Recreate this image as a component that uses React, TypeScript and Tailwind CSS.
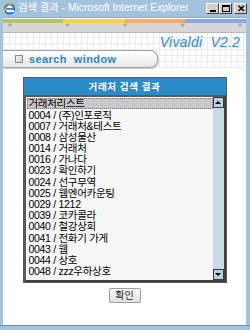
import React from "react";

const items = [
  "0004 / (주)인포로직",
  "0007 / 거래처&테스트",
  "0008 / 삼성물산",
  "0014 / 거래처",
  "0016 / 가나다",
  "0023 / 확인하기",
  "0024 / 선구무역",
  "0025 / 웹엔어카운팅",
  "0029 / 1212",
  "0039 / 코카콜라",
  "0040 / 철강상회",
  "0041 / 전화기 가게",
  "0043 / 웹",
  "0044 / 상호",
  "0048 / zzz우하상호",
];

const font = "font-['Liberation_Sans','Noto_Sans_CJK_KR',sans-serif]";

function IeIcon() {
  return (
    <svg width="13" height="13" viewBox="0 0 13 13">
      <circle cx="6.5" cy="7" r="4.6" fill="#fff" stroke="#1e6fd0" strokeWidth="2" />
      <rect x="3" y="6.2" width="7" height="1.6" fill="#1e6fd0" />
      <rect x="8" y="8" width="3" height="2" fill="#fff" />
      <path d="M1 10 C 3 3, 10 0, 12 2" fill="none" stroke="#f2b021" strokeWidth="1.3" />
    </svg>
  );
}

function WinButton({ children }: { children: React.ReactNode }) {
  return (
    <div className="flex h-[11px] w-[13px] items-center justify-center border border-t-white border-l-white border-r-[#404040] border-b-[#404040] bg-[#d4d0c8] text-black">
      {children}
    </div>
  );
}

export default function App() {
  return (
    <div className={`flex h-[330px] w-[250px] flex-col overflow-hidden bg-[#a3c2dc] ${font}`}>
      {/* title bar */}
      <div className="flex h-[17px] shrink-0 items-center pl-[3px] pr-[3px]">
        <IeIcon />
        <span className="ml-[2px] whitespace-nowrap text-[10.3px] leading-none text-white">
          검색 결과 - Microsoft Internet Explorer
        </span>
        <div className="ml-auto flex items-center">
          <WinButton>
            <div className="mt-[5px] h-[2px] w-[6px] bg-black" />
          </WinButton>
          <WinButton>
            <div className="h-[7px] w-[8px] border border-t-2 border-black" />
          </WinButton>
          <div className="ml-[2px]">
            <WinButton>
              <span className="text-[10px] font-bold leading-none">✕</span>
            </WinButton>
          </div>
        </div>
      </div>

      {/* client area */}
      <div className="ml-[3px] mr-[4px] flex min-h-0 flex-1 flex-col border-t border-[#8aa9c2] bg-white">
        <div className="mt-[1px] flex h-[4px] shrink-0">
          <div className="w-[60px] bg-[#b3c36a]" />
          <div className="w-[62px] bg-[#f4d24c]" />
          <div className="w-[60px] bg-[#f4a872]" />
          <div className="flex-1 bg-[#8ea6de]" />
        </div>
        <div className="flex h-[10px] shrink-0 items-center justify-between border-b border-[#b8b8b8] bg-[#d6d6d6] pl-[5px] pr-[4px] text-[10px] leading-none text-[#9a9a9a]">
          <span>*</span>
          <span>*</span>
          <span>*</span>
          <span>*</span>
          <span>*</span>
        </div>

        {/* grid header */}
        <div className="flex h-[35px] shrink-0 flex-col bg-[repeating-linear-gradient(90deg,#ebebeb_0_1px,transparent_1px_6px),repeating-linear-gradient(0deg,#ebebeb_0_1px,transparent_1px_6px)]">
          <div className="flex h-[17px] items-center justify-end pr-[6px]">
            <span className="text-[14px] italic leading-none tracking-[0.2px] text-[#3b8fcb] [text-shadow:1px_1px_0_#d8e8f4]">
              Vivaldi&nbsp; V2.2
            </span>
          </div>
          <div className="flex h-[18px] w-[155px] items-center rounded-r-[8px] border border-l-0 border-[#a0a0a0] bg-[linear-gradient(#ffffff,#e6e6e6)] pl-[12px] shadow-[1px_1px_0_#cfcfcf]">
            <div className="h-[8px] w-[8px] border border-[#8a8a8a] bg-[linear-gradient(135deg,#f4f4f4,#cfcfcf)]" />
            <span className="ml-[6px] whitespace-nowrap text-[11px] font-bold leading-none tracking-[0.4px] text-[#2b86c4]">
              search&nbsp; window
            </span>
          </div>
        </div>

        {/* result panel */}
        <div className="mx-auto mt-[9px] flex w-[204px] shrink-0 flex-col border border-[#5a5a5a] bg-white">
          <div className="flex h-[17px] items-center justify-center bg-[#2a8cc8] text-[9.5px] font-bold leading-none tracking-[0.6px] text-white">
            거래처 검색 결과
          </div>
          <div className="flex h-[187px] border-2 border-t-[#5a5a5a] border-l-[#5a5a5a] border-r-[#404040] border-b-[#404040] bg-[#f6f6f6]">
            <div className="min-w-0 flex-1 overflow-hidden pl-[1px] pt-[1px] text-[10.5px] tracking-[-0.3px] text-black">
              <div className="flex h-[11.2px] items-center overflow-hidden border border-dotted border-[#707070] bg-[#c9c5c9] pl-[1px] leading-none">
                거래처리스트
              </div>
              {items.map((it) => (
                <div key={it} className="flex h-[11.2px] items-center whitespace-nowrap pl-[2px] leading-none">
                  {it}
                </div>
              ))}
            </div>
            <div className="flex w-[11px] flex-col justify-between bg-[#c8dce8]">
              <div className="flex h-[11px] items-center justify-center border border-[#2f3f4a] bg-[#b9d0de]">
                <div className="h-0 w-0 border-x-[3px] border-b-[3px] border-x-transparent border-b-black" />
              </div>
              <div className="flex h-[11px] items-center justify-center border border-[#2f3f4a] bg-[#b9d0de]">
                <div className="h-0 w-0 border-x-[3px] border-t-[3px] border-x-transparent border-t-black" />
              </div>
            </div>
          </div>
        </div>

        <div className="mt-[5px] flex shrink-0 justify-center">
          <button className="flex h-[15px] w-[32px] items-center justify-center rounded-[2px] border border-[#9c9c9c] bg-[linear-gradient(#fafafa,#e2e2e2)] text-[10px] leading-none text-[#222]">
            확인
          </button>
        </div>
      </div>
      <div className="h-[5px] shrink-0 border-t border-[#6f8fa8]" />
    </div>
  );
}
